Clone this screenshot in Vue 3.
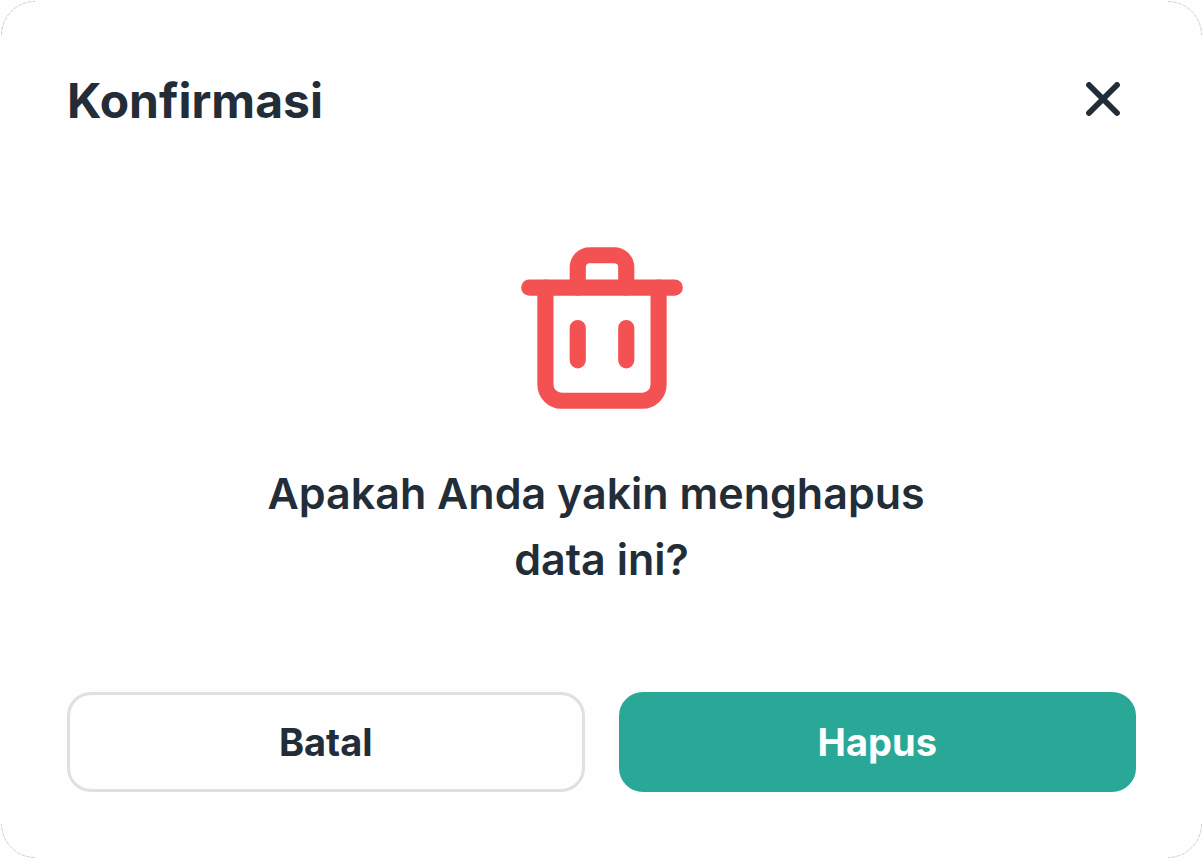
<script setup>
import { ref } from 'vue'

const title = ref('Konfirmasi')
const message = ref('Apakah Anda yakin menghapus data ini?')
const corners = ['top-left', 'top-right', 'bottom-right', 'bottom-left']
</script>

<template>
  <main class="dialog" role="dialog" aria-labelledby="dialog-title" aria-describedby="dialog-message">
    <svg
      v-for="corner in corners"
      :key="corner"
      class="corner"
      :class="corner"
      viewBox="0 0 34 34"
      aria-hidden="true"
    >
      <path d="M0.5 34C0.5 15.5 15.5 0.5 34 0.5" fill="none" stroke="#d2d2d2" stroke-dasharray="4 1" />
    </svg>

    <header class="header">
      <h1 id="dialog-title" class="title">{{ title }}</h1>
      <button class="close" type="button" aria-label="Tutup">
        <svg class="close-icon" viewBox="0 0 34 34" aria-hidden="true">
          <path d="M3 3L31 31M31 3L3 31" fill="none" stroke="#222d38" stroke-width="5.8" stroke-linecap="round" />
        </svg>
      </button>
    </header>

    <section class="body">
      <svg class="trash" viewBox="0 0 24 24" aria-hidden="true">
        <g fill="none" stroke="#f45252" stroke-width="2" stroke-linecap="round" stroke-linejoin="round">
          <path d="M3 7H21" />
          <path d="M5 7V19A2 2 0 0 0 7 21H17A2 2 0 0 0 19 19V7" />
          <path d="M9 7V4.500A1.500 1.500 0 0 1 10.500 3H13.500A1.500 1.500 0 0 1 15 4.500V7" />
          <path d="M9 12V16M15 12V16" />
        </g>
      </svg>
      <p id="dialog-message" class="message">{{ message }}</p>
    </section>

    <footer class="actions">
      <button class="action cancel" type="button">Batal</button>
      <button class="action confirm" type="button">Hapus</button>
    </footer>
  </main>
</template>

<style>
body {
  margin: 0;
  background: #fefefe;
}
</style>

<style scoped>
.dialog {
  position: relative;
  box-sizing: border-box;
  display: flex;
  flex-direction: column;
  min-height: 100vh;
  padding: 67px;
  color: #222d38;
  background: #fefefe;
  font-family: Inter, "Liberation Sans", sans-serif;
}

.corner {
  position: absolute;
  width: 34px;
  height: 34px;
}

.top-left {
  top: 1px;
  left: 1px;
}

.top-right {
  top: 1px;
  right: 1px;
  transform: rotate(90deg);
}

.bottom-right {
  right: 1px;
  bottom: 1px;
  transform: rotate(180deg);
}

.bottom-left {
  bottom: 1px;
  left: 1px;
  transform: rotate(270deg);
}

.header {
  display: flex;
  align-items: center;
  justify-content: space-between;
}

.title {
  margin: 0;
  font-size: 48px;
  font-weight: 700;
  line-height: 68px;
}

.close {
  display: grid;
  place-items: center;
  width: 66px;
  height: 64px;
  align-self: flex-start;
  padding: 0;
  border: 0;
  background: none;
  cursor: pointer;
}

.close-icon {
  width: 34px;
  height: 34px;
}

.body {
  display: flex;
  flex: 1;
  flex-direction: column;
  align-items: center;
  padding: 96px 0;
}

.trash {
  width: 194px;
  height: 194px;
}

.message {
  max-width: 720px;
  margin: 35px 0 0;
  font-size: 43px;
  font-weight: 600;
  line-height: 66px;
  text-align: center;
  white-space: break-spaces;
}

.actions {
  display: grid;
  grid-template-columns: 1fr 1fr;
  gap: 34px;
}

.action {
  box-sizing: border-box;
  height: 100px;
  padding: 0 24px;
  border: 3px solid #e0e0e0;
  border-radius: 24px;
  font-family: inherit;
  font-size: 38px;
  font-weight: 700;
  cursor: pointer;
}

.cancel {
  color: #222d38;
  background: #fefefe;
}

.confirm {
  border-color: #29a898;
  color: #fefefe;
  background: #29a898;
}
</style>
